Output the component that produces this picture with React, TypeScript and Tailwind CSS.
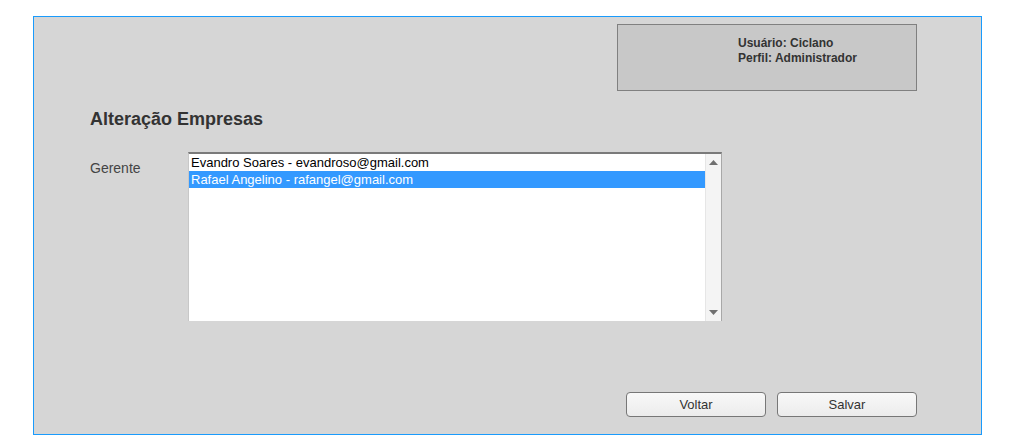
import React from 'react';

const managers = [
  { name: 'Evandro Soares', email: 'evandroso@gmail.com', selected: false },
  { name: 'Rafael Angelino', email: 'rafangel@gmail.com', selected: true },
];

const App = () => {
  return (
    <div className="min-h-[435px] bg-white pt-[16px] pl-[33px] font-['Liberation_Sans',Arial,sans-serif]">
      <div className="w-[949px] h-[419px] border border-[#1a9bfc] bg-[#d6d6d6] flex flex-col">
        {/* user info */}
        <div className="flex justify-end pr-[64px] pt-[7px]">
          <div className="w-[300px] h-[67px] border border-[#808080] bg-[#c8c8c8] pl-[120px] pt-[11px] text-[12px] leading-[15px] font-bold text-[#333]">
            <div>Usuário: Ciclano</div>
            <div>Perfil: Administrador</div>
          </div>
        </div>

        <h2 className="ml-[56px] mt-[18px] text-[18px] leading-[20px] font-bold text-[#333]">Alteração Empresas</h2>

        <div className="flex mt-[23px] ml-[56px]">
          <div className="w-[98px] pt-[8px] text-[14px] leading-[16px] text-[#444]">Gerente</div>
          <div className="w-[534px] h-[169px] bg-white border-t-2 border-t-[#7a7a7a] border-l border-l-[#c8c8c8] border-r border-r-[#a8a8a8] flex">
            <div className="flex-1 flex flex-col">
              {managers.map((m, i) => (
                <div
                  key={i}
                  className={
                    m.selected
                      ? 'h-[17px] pl-[2px] pt-[1px] text-[13px] leading-[16px] bg-[#3399ff] text-white'
                      : 'h-[17px] pl-[2px] pt-[1px] text-[13px] leading-[16px] text-black'
                  }
                >
                  {m.name} - {m.email}
                </div>
              ))}
            </div>
            <div className="w-[16px] bg-[#f4f4f4] border-l border-l-[#e6e6e6] flex flex-col justify-between items-center py-[6px]">
              <svg width="9" height="5" viewBox="0 0 9 5"><path d="M4.5 0L9 5H0z" fill="#707070" /></svg>
              <svg width="9" height="5" viewBox="0 0 9 5"><path d="M0 0H9L4.5 5z" fill="#707070" /></svg>
            </div>
          </div>
        </div>

        <div className="flex-1" />

        <div className="flex justify-end gap-[11px] pr-[64px] pb-[17px]">
          <button className="w-[140px] h-[25px] rounded-[4px] border border-[#777] bg-gradient-to-b from-[#f8f8f8] to-[#ececec] text-[13px] text-[#333]">
            Voltar
          </button>
          <button className="w-[140px] h-[25px] rounded-[4px] border border-[#777] bg-gradient-to-b from-[#f8f8f8] to-[#ececec] text-[13px] text-[#333]">
            Salvar
          </button>
        </div>
      </div>
    </div>
  );
};

export default App;
